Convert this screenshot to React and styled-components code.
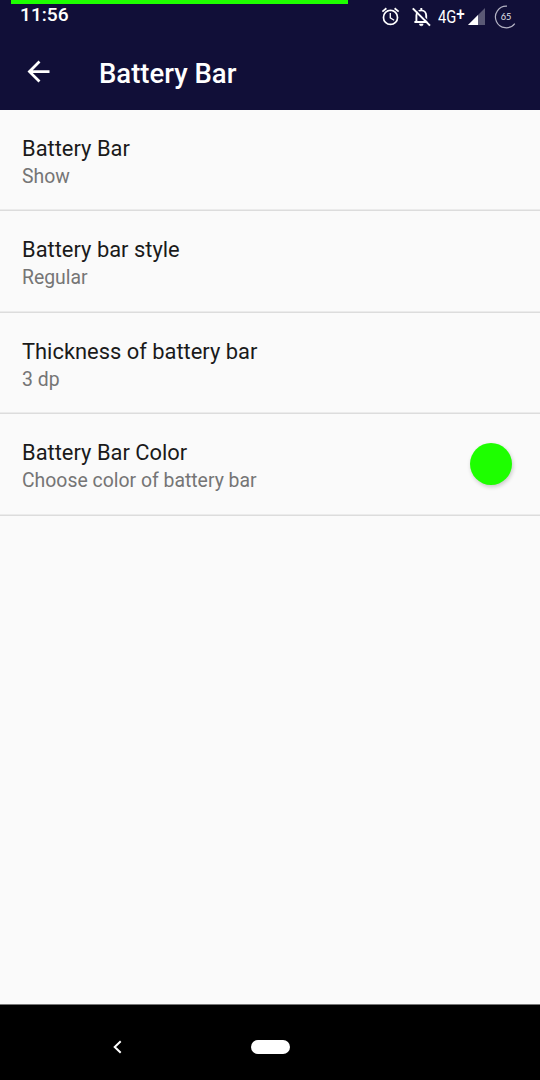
import React from "react";
import styled, { createGlobalStyle } from "styled-components";
import { MdArrowBack, MdOutlineAlarm } from "react-icons/md";

const GlobalStyle = createGlobalStyle`
  * {
    box-sizing: border-box;
  }
  body {
    margin: 0;
    font-family: Roboto, sans-serif;
  }
`;

const Screen = styled.div`
  display: flex;
  flex-direction: column;
  width: 540px;
  height: 1080px;
  overflow: hidden;
  background-color: #fafafa;
`;

const Header = styled.header`
  height: 110px;
  background-color: #110f38;
  color: #fff;
`;

const BatteryBar = styled.div`
  width: 336.5px;
  height: 4px;
  margin-left: 11px;
  background-color: ${(props) => props.$color};
`;

const StatusBar = styled.div`
  display: flex;
  justify-content: space-between;
  height: 29px;
  padding: 0 24px 0 20px;
`;

const Clock = styled.div`
  font-size: 19.2px;
  font-weight: 500;
  line-height: 22px;
`;

const StatusIcons = styled.div`
  display: flex;
  align-items: center;
  height: 25px;
`;

const AlarmIcon = styled(MdOutlineAlarm)`
  width: 21px;
  height: 21px;
  margin-right: 11px;
`;

const MutedIcon = styled.svg`
  width: 19px;
  height: 20px;
  margin-right: 7px;
`;

const Network = styled.span`
  width: 30px;
  font-size: 17.5px;
  line-height: 20px;
  white-space: nowrap;
  transform: scaleX(0.84);
  transform-origin: left;
`;

const Plus = styled.span`
  display: inline-block;
  font-size: 18px;
  font-weight: 500;
  transform: translateY(-3px);
`;

const Signal = styled.svg`
  width: 17px;
  height: 17px;
  margin-right: 9px;
`;

const BatteryRing = styled.svg`
  width: 22px;
  height: 24px;
  overflow: visible;
`;

const Toolbar = styled.div`
  display: flex;
  align-items: center;
  height: 77px;
  padding-left: 22px;
`;

const BackIcon = styled(MdArrowBack)`
  width: 33px;
  height: 33px;
`;

const Title = styled.h1`
  margin: 4px 0 0 44px;
  font-size: 27.5px;
  font-weight: 500;
  line-height: 32px;
`;

const List = styled.main`
  flex: 1;
`;

const Row = styled.div`
  display: flex;
  align-items: center;
  justify-content: space-between;
  height: 101.5px;
  padding: 0 28px 0 22px;
  box-shadow: inset 0 -1.5px #dcdcdc;

  &:first-child {
    height: 101px;
  }
`;

const Labels = styled.div`
  padding-top: 4px;
`;

const Name = styled.div`
  font-size: 21.9px;
  line-height: 25px;
  color: #1a1a1a;
`;

const Summary = styled.div`
  margin-top: 4px;
  font-size: 19.4px;
  line-height: 24px;
  color: #757575;
`;

const Swatch = styled.div`
  width: 42px;
  height: 42px;
  margin-bottom: 1px;
  border-radius: 50%;
  background-color: ${(props) => props.$color};
  box-shadow: 1px 2px 4px rgba(0, 0, 0, 0.2);
`;

const NavBar = styled.nav`
  display: flex;
  align-items: center;
  height: 76px;
  padding: 9px 0 0 112px;
  border-top: 1px solid #777;
  background-color: #000;
`;

const NavBack = styled.svg`
  width: 12px;
  height: 14px;
`;

const HomePill = styled.div`
  width: 39px;
  height: 14px;
  margin-left: 127px;
  border-radius: 7px;
  background-color: #fff;
`;

const green = "#1eff00";

const settings = [
  { name: "Battery Bar", summary: "Show" },
  { name: "Battery bar style", summary: "Regular" },
  { name: "Thickness of battery bar", summary: "3 dp" },
  {
    name: "Battery Bar Color",
    summary: "Choose color of battery bar",
    color: green,
  },
];

const App = () => {
  return (
    <>
      <GlobalStyle />
      <Screen>
        <Header>
          <BatteryBar $color={green} />
          <StatusBar>
            <Clock>11:56</Clock>
            <StatusIcons>
              <AlarmIcon />
              <MutedIcon viewBox="0 0 19 20" fill="none" stroke="#fff">
                <path
                  d="M2.4 15H16M4.4 15V8.6C4.4 5.5 6.5 3.4 9.3 3.4S14.2 5.5 14.2 8.6V15M9.3 1V3.4"
                  strokeWidth="1.9"
                />
                <path d="M7.4 16.9H11.2A1.9 1.9 0 0 1 7.4 16.9Z" fill="#fff" strokeWidth="0.5" />
                <path d="M2.2 0.4L19 17.2" stroke="#110f38" strokeWidth="1.4" />
                <path d="M0.8 1.4L18 18.6" strokeWidth="2" />
              </MutedIcon>
              <Network>
                4G<Plus>+</Plus>
              </Network>
              <Signal viewBox="0 0 17 17">
                <path d="M17 0V17H0Z" fill="#5a5975" />
                <path d="M10 7V17H0Z" fill="#fff" />
              </Signal>
              <BatteryRing viewBox="0 0 22 24">
                <path
                  d="M13 1.2A10.8 10.8 0 1 0 20.8 18.6"
                  fill="none"
                  stroke="#b4b3c4"
                  strokeWidth="1.2"
                />
                <text
                  x="12"
                  y="15"
                  fontFamily="Lato, sans-serif"
                  fontSize="9.2"
                  fill="#e4e4ec"
                  textAnchor="middle"
                >
                  65
                </text>
              </BatteryRing>
            </StatusIcons>
          </StatusBar>
          <Toolbar>
            <BackIcon />
            <Title>Battery Bar</Title>
          </Toolbar>
        </Header>
        <List>
          {settings.map((item) => (
            <Row key={item.name}>
              <Labels>
                <Name>{item.name}</Name>
                <Summary>{item.summary}</Summary>
              </Labels>
              {item.color && <Swatch $color={item.color} />}
            </Row>
          ))}
        </List>
        <NavBar>
          <NavBack viewBox="0 0 12 14">
            <path d="M8.7 1.2L2.7 7L8.7 12.8" fill="none" stroke="#fff" strokeWidth="2" />
          </NavBack>
          <HomePill />
        </NavBar>
      </Screen>
    </>
  );
};

export default App;
